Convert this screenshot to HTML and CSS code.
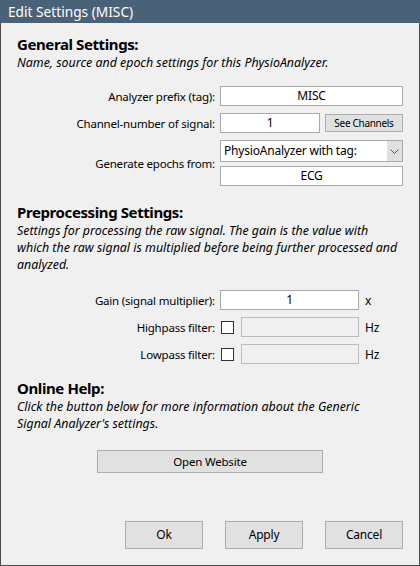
FILE: index.html
```html
<!DOCTYPE html>
<html>
<head>
<meta charset="utf-8">
<link rel="stylesheet" href="styles.css">
</head>
<body>
<div class="window">
  <div class="titlebar">Edit Settings (MISC)</div>
  <div class="content">
    <h2 class="heading first">General Settings:</h2>
    <p class="desc">Name, source and epoch settings for this PhysioAnalyzer.</p>
    <div class="form general">
      <div class="row">
        <label class="label">Analyzer prefix (tag):</label>
        <div class="input wide">MISC</div>
      </div>
      <div class="row">
        <label class="label">Channel-number of signal:</label>
        <div class="input mid">1</div>
        <div class="btn small">See Channels</div>
      </div>
      <div class="row epochs">
        <label class="label">Generate epochs from:</label>
        <div class="stack">
          <div class="select">
            <span class="select-text">PhysioAnalyzer with tag:</span>
            <span class="arrow"><svg width="9" height="5" viewBox="0 0 9 5"><path d="M0.5 0.5 L4.5 4.5 L8.5 0.5" fill="none" stroke="#555" stroke-width="1"/></svg></span>
          </div>
          <div class="input wide">ECG</div>
        </div>
      </div>
    </div>

    <h2 class="heading pre">Preprocessing Settings:</h2>
    <p class="desc">Settings for processing the raw signal. The gain is the value with which the raw signal is multiplied before being further processed and analyzed.</p>
    <div class="form prep">
      <div class="row">
        <label class="label">Gain (signal multiplier):</label>
        <div class="input gain">1</div>
        <span class="unit">x</span>
      </div>
      <div class="row">
        <label class="label">Highpass filter:</label>
        <span class="check"></span>
        <div class="input disabled"></div>
        <span class="unit">Hz</span>
      </div>
      <div class="row">
        <label class="label">Lowpass filter:</label>
        <span class="check"></span>
        <div class="input disabled"></div>
        <span class="unit">Hz</span>
      </div>
    </div>

    <h2 class="heading help">Online Help:</h2>
    <p class="desc narrow">Click the button below for more information about the Generic Signal Analyzer's settings.</p>
    <div class="website-wrap">
      <div class="btn website">Open Website</div>
    </div>

    <div class="actions">
      <div class="btn action">Ok</div>
      <div class="btn action">Apply</div>
      <div class="btn action">Cancel</div>
    </div>
  </div>
</div>
</body>
</html>
```
FILE: styles.css
```css
* { box-sizing: border-box; }
html, body { margin: 0; padding: 0; }
body {
  font-family: "Noto Sans", "Open Sans", sans-serif;
  font-size: 11.5px;
  letter-spacing: -0.2px;
  color: #000;
  background: #f0f0f0;
}
.window {
  width: 420px;
  height: 566px;
  display: flex;
  flex-direction: column;
  border-left: 1px solid #4d4d4d;
  border-right: 1px solid #4d4d4d;
  border-bottom: 1px solid #4d4d4d;
  background: #f0f0f0;
}
.titlebar {
  height: 23px;
  margin: 0 -1px;
  background: #4a6278;
  color: #fff;
  font-size: 13.7px;
  letter-spacing: 0;
  line-height: 23px;
  padding-left: 8px;
}
.content {
  flex: 1;
  display: flex;
  flex-direction: column;
  padding: 0 16px 0 16px;
}
.heading {
  margin: 0;
  font-size: 15px;
  font-weight: bold;
  line-height: 20px;
  letter-spacing: -0.4px;
}
.heading.first { margin-top: 11px; }
.heading.pre { margin-top: 16px; }
.heading.help { margin-top: 14px; }
.desc {
  margin: 0;
  font-style: italic;
  line-height: 17px;
  font-size: 12.4px;
  letter-spacing: 0;
}
.desc.narrow { max-width: 368px; }
.form { display: flex; flex-direction: column; gap: 7px; }
.form.general { margin-top: 15px; }
.form.prep { margin-top: 17px; }
.row {
  display: flex;
  align-items: center;
  gap: 5px;
}
.label {
  width: 198px;
  text-align: right;
  flex: none;
}
.input {
  height: 20px;
  background: #fff;
  border: 1px solid #a9a9a9;
  text-align: center;
  line-height: 18px;
  font-size: 12px;
}
.input.wide { width: 183px; }
.input.mid { width: 100px; }
.input.gain { width: 139px; }
.input.disabled {
  width: 118px;
  background: #f0f0f0;
  border-color: #bcbcbc;
  margin-left: 2px;
}
.btn {
  background: #e1e1e1;
  border: 1px solid #adadad;
  text-align: center;
}
.btn.small {
  width: 78px;
  height: 18px;
  line-height: 16px;
  font-size: 10px;
  letter-spacing: -0.3px;
}
.stack { display: flex; flex-direction: column; gap: 4px; }
.select {
  width: 183px;
  height: 22px;
  display: flex;
  background: #fff;
  border: 1px solid #a9a9a9;
}
.select-text {
  flex: 1;
  line-height: 20px;
  padding-left: 3px;
  font-size: 12px;
}
.arrow {
  width: 15px;
  background: #e0e0e0;
  display: flex;
  align-items: center;
  justify-content: center;
}
.unit { margin-left: 1px; font-size: 12px; }
.check {
  width: 13px;
  height: 13px;
  border: 1px solid #333;
  background: #fff;
  margin-left: 1px;
  flex: none;
}
.website-wrap {
  margin-top: 18px;
  padding-left: 80px;
}
.btn.website {
  width: 226px;
  height: 23px;
  line-height: 21px;
}
.actions {
  margin-top: auto;
  margin-bottom: 16px;
  display: flex;
  justify-content: flex-end;
  gap: 22px;
}
.btn.action {
  width: 78px;
  height: 28px;
  line-height: 26px;
  font-size: 12px;
}
```
